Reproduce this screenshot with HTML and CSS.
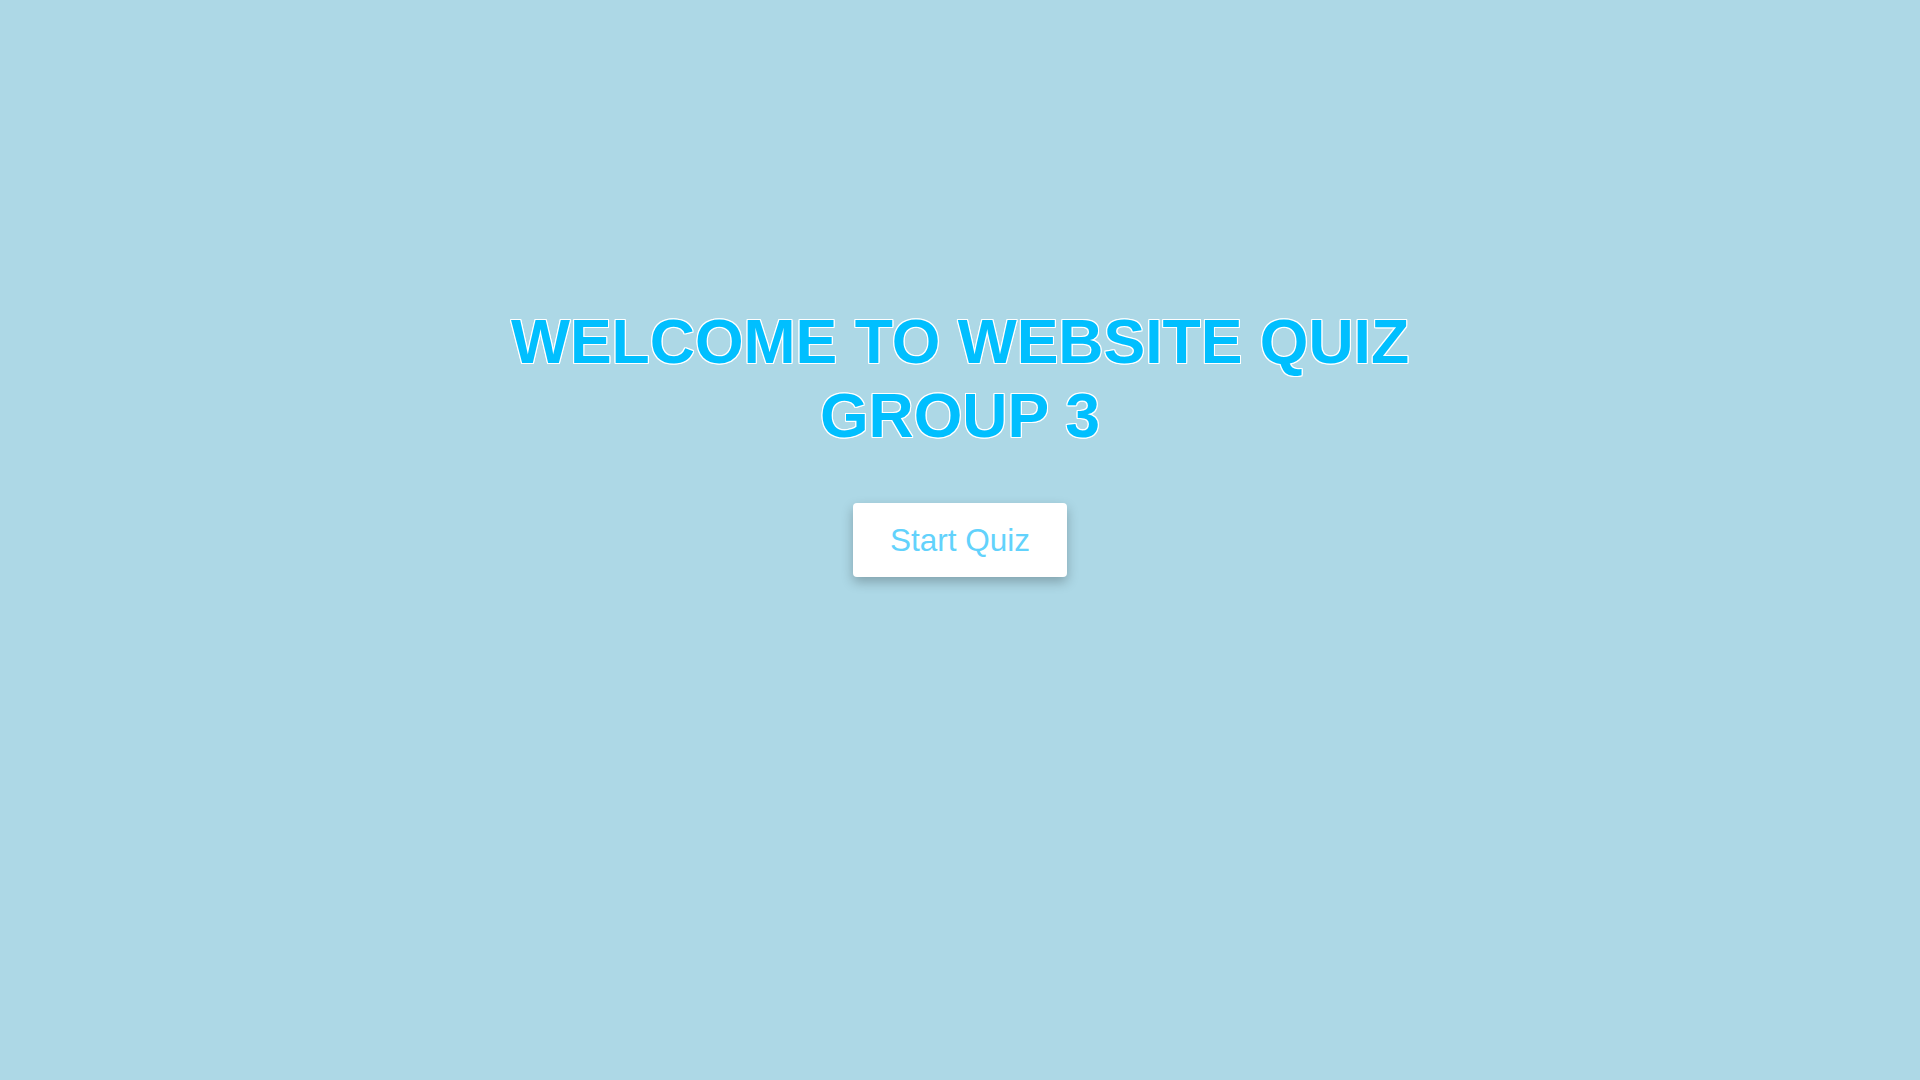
FILE: index.html
```html
<!DOCTYPE html>
<html lang="en">
<head>
<meta charset="utf-8">
<title>Website Quiz</title>
<link rel="stylesheet" href="styles.css">
</head>
<body>
<main class="welcome">
  <h1 class="title">WELCOME TO WEBSITE QUIZ<br>GROUP 3</h1>
  <button class="start-btn" type="button">Start Quiz</button>
</main>
</body>
</html>
```
FILE: styles.css
```css
html, body {
  margin: 0;
  padding: 0;
  height: 100%;
}
body {
  background: #add8e6;
  font-family: "Liberation Sans", Arial, sans-serif;
}
.welcome {
  display: flex;
  flex-direction: column;
  align-items: center;
  padding-top: 304px;
}
.title {
  margin: 0;
  font-size: 62.5px;
  font-weight: bold;
  line-height: 74px;
  text-align: center;
  color: #00bfff;
  text-shadow:
    -1px -1px 0 #fff,
     1px -1px 0 #fff,
    -1px  1px 0 #fff,
     1px  1px 0 #fff,
     0 -1px 0 #fff,
     0  1px 0 #fff,
    -1px 0 0 #fff,
     1px 0 0 #fff;
}
.start-btn {
  margin-top: 51px;
  padding: 20px 0;
  width: 214px;
  font-family: "Liberation Sans", Arial, sans-serif;
  font-size: 31.5px;
  line-height: 34px;
  color: #62d2fc;
  background: #fff;
  border: none;
  border-radius: 4px;
  box-shadow: 0 5px 12px rgba(0, 0, 0, 0.25);
  cursor: pointer;
}
```
